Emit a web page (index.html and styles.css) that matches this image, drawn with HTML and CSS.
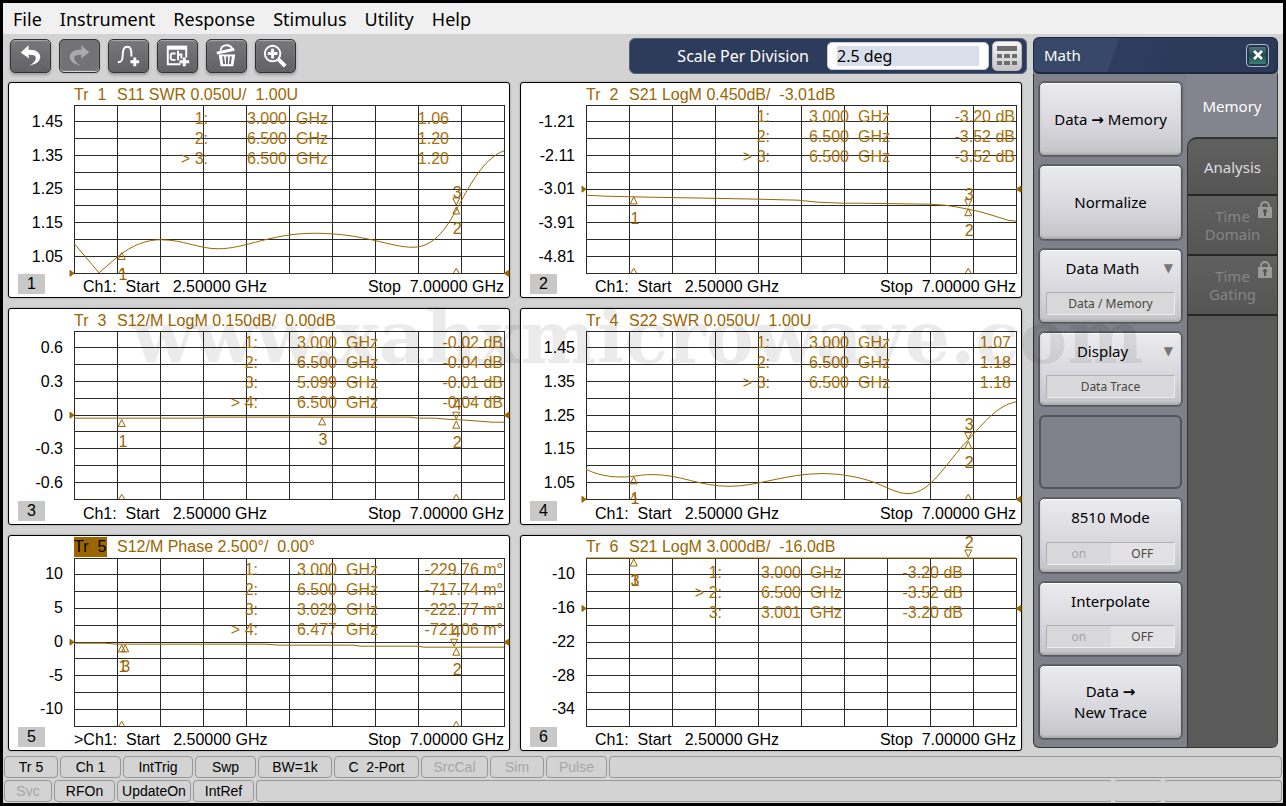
FILE: index.html
```html
<!DOCTYPE html>
<html lang="en">
<head>
    <meta charset="UTF-8">
    <meta name="viewport" content="width=device-width, initial-scale=1.0">
    <title>Network Analyzer</title>
    <link rel="stylesheet" href="styles.css">
</head>
<body>

    <!-- shared shapes -->
    <svg class="defs" width="0" height="0" aria-hidden="true">
        <symbol id="grid" overflow="visible">
            <rect width="100%" height="100%" />
            <line x1="10%" x2="10%" y2="100%" /><line x1="20%" x2="20%" y2="100%" /><line x1="30%" x2="30%" y2="100%" />
            <line x1="40%" x2="40%" y2="100%" /><line x1="50%" x2="50%" y2="100%" /><line x1="60%" x2="60%" y2="100%" />
            <line x1="70%" x2="70%" y2="100%" /><line x1="80%" x2="80%" y2="100%" /><line x1="90%" x2="90%" y2="100%" />
            <line y1="10%" y2="10%" x2="100%" /><line y1="20%" y2="20%" x2="100%" /><line y1="30%" y2="30%" x2="100%" />
            <line y1="40%" y2="40%" x2="100%" /><line y1="50%" y2="50%" x2="100%" /><line y1="60%" y2="60%" x2="100%" />
            <line y1="70%" y2="70%" x2="100%" /><line y1="80%" y2="80%" x2="100%" /><line y1="90%" y2="90%" x2="100%" />
        </symbol>
        <defs>
            <path id="up" d="M0 1L3.5 8H-3.5Z" />
            <path id="down" d="M0 -1L3.5 -8H-3.5Z" />
            <path id="foot" d="M-3 0L0 -5L3 0" />
            <path id="ref-l" d="M0 0L-4 -3V3Z" />
            <path id="ref-r" d="M0 0L5 -3V3Z" />
            <g id="lock">
                <path d="M3 7V5a4 4 0 0 1 8 0v2" fill="none" stroke="#9a9a9a" stroke-width="2" />
                <rect y="6" width="14" height="11" fill="#9a9a9a" />
                <circle cx="7" cy="10" r="2" fill="#555" />
                <rect x="6" y="10" width="2" height="5" fill="#555" />
            </g>
        </defs>
    </svg>

    <nav class="menu">
        <a href="#">File</a>
        <a href="#">Instrument</a>
        <a href="#">Response</a>
        <a href="#">Stimulus</a>
        <a href="#">Utility</a>
        <a href="#">Help</a>
    </nav>

    <main class="main">
        <div class="work">
            <div class="toolbar">
                <button class="tool" aria-label="Undo">
                    <svg width="40" height="33" viewBox="0 0 40 33"><path d="M10 13L18 5.500V10C26 9.500 30 13 30 17.500C30 22 26 25 18.500 26.500C23 24 25.500 21.500 25.500 18.500C25.500 16 23 15 18 15.200L18.500 19Z" fill="#fff" /></svg>
                </button>
                <button class="tool off" aria-label="Redo">
                    <svg width="40" height="33" viewBox="0 0 40 33"><path d="M30 13L22 5.500V10C14 9.500 10 13 10 17.500C10 22 14 25 21.500 26.500C17 24 14.500 21.500 14.500 18.500C14.500 16 17 15 22 15.200L21.500 19Z" fill="#aaaaae" /></svg>
                </button>
                <button class="tool" aria-label="Add trace">
                    <svg width="40" height="33" viewBox="0 0 40 33" fill="none" stroke="#fff"><path d="M9 23C13 23 14 21 14 16C14 10 15 7 18.500 7C23 7 23 11 23 17" stroke-width="2" /><path d="M26.500 18V27M22 22.500H31" stroke-width="3" /></svg>
                </button>
                <button class="tool" aria-label="Add channel">
                    <svg width="40" height="33" viewBox="0 0 40 33" fill="none" stroke="#fff"><path d="M29 18V7H10V25H23" stroke-width="2" /><path d="M10 8H29" stroke-width="4" /><path d="M18 14H14L13 15.500V19L14 20.500H18M20.500 11V21M20.500 16L22 15H24V19" stroke-width="2" /><path d="M27 18V27M22 22.500H32" stroke-width="3" /></svg>
                </button>
                <button class="tool" aria-label="Delete">
                    <svg width="40" height="33" viewBox="0 0 40 33" fill="none" stroke="#fff"><path d="M10 13.500L28 9.500" stroke-width="3" /><path d="M14 11C14 5 23 3 26 9" stroke-width="2" /><path d="M12 15H29L27 27H14Z" fill="#fff" stroke="none" /><path d="M16.500 17L17.500 25M20.500 17V25M24.500 17L23.500 25" stroke="#6b6b6e" stroke-width="2" /></svg>
                </button>
                <button class="tool" aria-label="Zoom">
                    <svg width="40" height="33" viewBox="0 0 40 33" fill="none" stroke="#fff"><circle cx="17" cy="14" r="8" stroke-width="2" /><path d="M17 9V19M12 14H22" stroke-width="3" /><path d="M23 20L30 27" stroke-width="4" /></svg>
                </button>

                <div class="entry">
                    <label for="scale">Scale Per Division</label>
                    <input id="scale" type="text" value="2.5 deg">
                    <button class="keypad" aria-label="Keypad">
                        <svg width="20" height="20" viewBox="0 0 20 20" fill="#6e6e70"><path d="M0 0H20V5H0ZM0 8H5V12H0ZM7 8H13V12H7ZM15 8H20V12H15ZM0 15H5V19H0ZM7 15H13V19H7ZM15 15H20V19H15Z" /></svg>
                    </button>
                </div>
            </div>

            <div class="charts">
                <section class="chart">
                    <header class="title"><span class="tr">Tr  1</span><span>S11 SWR 0.050U/  1.00U</span></header>
                    <div class="scale"><span>1.45</span><span>1.35</span><span>1.25</span><span>1.15</span><span>1.05</span></div>
                    <div class="plot">
                        <svg class="canvas">
                            <use class="grid" href="#grid" width="100%" height="100%" />
                            <svg viewBox="0 0 430 168" preserveAspectRatio="none">
                                <path class="trace" d="M0 138L25 167.5L43 152C59 139 73 134.5 87 134.5C109 134.5 125 143.5 144 143.5C172 143.5 196 128 241 128C290 128 316 142 339 142C365 142 378 112 387 96C400 72 413 52 430 45.7" />
                            </svg>
                            <g class="mark">
                                <use href="#ref-l" y="100%" /><use href="#ref-r" x="100%" y="100%" />
                                <use href="#up" x="11.1%" y="87%" /><text x="11.4%" y="87%" dy="29">1</text>
                                <use href="#up" x="88.9%" y="60%" /><text x="89.1%" y="60%" dy="28">2</text>
                                <use href="#down" x="88.9%" y="60%" /><text x="89.1%" y="60%" dy="-8">3</text>
                                <use href="#foot" x="11.1%" y="100%" /><use href="#foot" x="88.9%" y="100%" />
                            </g>
                        </svg>
                        <table class="readout inset">
                            <tr><td>1:</td><td>3.000</td><td>GHz</td><td>1.06</td></tr>
                            <tr><td>2:</td><td>6.500</td><td>GHz</td><td>1.20</td></tr>
                            <tr><td>&gt; 3:</td><td>6.500</td><td>GHz</td><td>1.20</td></tr>
                        </table>
                    </div>
                    <span class="num">1</span>
                    <footer class="sweep"><span>  Ch1:  Start   2.50000 GHz</span><span>Stop  7.00000 GHz</span></footer>
                </section>

                <section class="chart">
                    <header class="title"><span class="tr">Tr  2</span><span>S21 LogM 0.450dB/  -3.01dB</span></header>
                    <div class="scale"><span>-1.21</span><span>-2.11</span><span>-3.01</span><span>-3.91</span><span>-4.81</span></div>
                    <div class="plot">
                        <svg class="canvas">
                            <use class="grid" href="#grid" width="100%" height="100%" />
                            <svg viewBox="0 0 430 168" preserveAspectRatio="none">
                                <polyline class="trace" points="0,90 19,91 63,92 121,93 172,94 212,95 232,97 256,98 273,98 344,99 359,100 372,102 382,104 392,106 406,110 422,115 430,116" />
                            </svg>
                            <g class="mark">
                                <use href="#ref-l" y="50%" /><use href="#ref-r" x="100%" y="50%" />
                                <use href="#up" x="11.1%" y="54%" /><text x="11.4%" y="54%" dy="28">1</text>
                                <use href="#up" x="88.9%" y="61%" /><text x="89.1%" y="61%" dy="28">2</text>
                                <use href="#down" x="88.9%" y="61%" /><text x="89.1%" y="61%" dy="-8">3</text>
                                <use href="#foot" x="11.1%" y="100%" /><use href="#foot" x="88.9%" y="100%" />
                            </g>
                        </svg>
                        <table class="readout">
                            <tr><td>1:</td><td>3.000</td><td>GHz</td><td>-3.20 dB</td></tr>
                            <tr><td>2:</td><td>6.500</td><td>GHz</td><td>-3.52 dB</td></tr>
                            <tr><td>&gt; 3:</td><td>6.500</td><td>GHz</td><td>-3.52 dB</td></tr>
                        </table>
                    </div>
                    <span class="num">2</span>
                    <footer class="sweep"><span>  Ch1:  Start   2.50000 GHz</span><span>Stop  7.00000 GHz</span></footer>
                </section>

                <section class="chart">
                    <header class="title"><span class="tr">Tr  3</span><span>S12/M LogM 0.150dB/  0.00dB</span></header>
                    <div class="scale"><span>0.6</span><span>0.3</span><span>0</span><span>-0.3</span><span>-0.6</span></div>
                    <div class="plot">
                        <svg class="canvas">
                            <use class="grid" href="#grid" width="100%" height="100%" />
                            <svg viewBox="0 0 430 168" preserveAspectRatio="none">
                                <polyline class="trace" points="0,87 129,87 130,86 337,86 344,87 362,87 372,88 392,89 405,90 418,91 430,91" />
                            </svg>
                            <g class="mark">
                                <use href="#ref-l" y="50%" /><use href="#ref-r" x="100%" y="50%" />
                                <use href="#up" x="11.1%" y="52%" /><text x="11.4%" y="52%" dy="28">1</text>
                                <use href="#up" x="57.7%" y="51%" /><text x="57.9%" y="51%" dy="28">3</text>
                                <use href="#up" x="88.9%" y="53%" /><text x="89.1%" y="53%" dy="28">2</text>
                                <use href="#down" x="88.9%" y="53%" /><text x="89.1%" y="53%" dy="-10">4</text>
                                <use href="#foot" x="11.1%" y="100%" /><use href="#foot" x="88.9%" y="100%" />
                            </g>
                        </svg>
                        <table class="readout">
                            <tr><td>1:</td><td>3.000</td><td>GHz</td><td>-0.02 dB</td></tr>
                            <tr><td>2:</td><td>6.500</td><td>GHz</td><td>-0.04 dB</td></tr>
                            <tr><td>3:</td><td>5.099</td><td>GHz</td><td>-0.01 dB</td></tr>
                            <tr><td>&gt; 4:</td><td>6.500</td><td>GHz</td><td>-0.04 dB</td></tr>
                        </table>
                    </div>
                    <span class="num">3</span>
                    <footer class="sweep"><span>  Ch1:  Start   2.50000 GHz</span><span>Stop  7.00000 GHz</span></footer>
                </section>

                <section class="chart">
                    <header class="title"><span class="tr">Tr  4</span><span>S22 SWR 0.050U/  1.00U</span></header>
                    <div class="scale"><span>1.45</span><span>1.35</span><span>1.25</span><span>1.15</span><span>1.05</span></div>
                    <div class="plot">
                        <svg class="canvas">
                            <use class="grid" href="#grid" width="100%" height="100%" />
                            <svg viewBox="0 0 430 168" preserveAspectRatio="none">
                                <path class="trace" d="M0 138C12 144 24 145.7 36 145.7C49 145.7 53 143.3 66 143.3C96 143.3 112 155 144 155C172 155 200 142.3 236 142.3C258 142.3 277 147 287 150.7C300 155 310 162.3 322 162.3C345 162.3 360 131 382 109C398 91 412 74 430 70.7" />
                            </svg>
                            <g class="mark">
                                <use href="#ref-l" y="100%" /><use href="#ref-r" x="100%" y="100%" />
                                <use href="#up" x="11.1%" y="86%" /><text x="11.4%" y="86%" dy="28">1</text>
                                <use href="#up" x="88.9%" y="65%" /><text x="89.1%" y="65%" dy="28">2</text>
                                <use href="#down" x="88.9%" y="65%" /><text x="89.1%" y="65%" dy="-10">3</text>
                                <use href="#foot" x="11.1%" y="100%" /><use href="#foot" x="88.9%" y="100%" />
                            </g>
                        </svg>
                        <table class="readout near">
                            <tr><td>1:</td><td>3.000</td><td>GHz</td><td>1.07</td></tr>
                            <tr><td>2:</td><td>6.500</td><td>GHz</td><td>1.18</td></tr>
                            <tr><td>&gt; 3:</td><td>6.500</td><td>GHz</td><td>1.18</td></tr>
                        </table>
                    </div>
                    <span class="num">4</span>
                    <footer class="sweep"><span>  Ch1:  Start   2.50000 GHz</span><span>Stop  7.00000 GHz</span></footer>
                </section>

                <section class="chart">
                    <header class="title"><span class="tr active">Tr  5</span><span>S12/M Phase 2.500°/  0.00°</span></header>
                    <div class="scale"><span>10</span><span>5</span><span>0</span><span>-5</span><span>-10</span></div>
                    <div class="plot">
                        <svg class="canvas">
                            <use class="grid" href="#grid" width="100%" height="100%" />
                            <svg viewBox="0 0 430 168" preserveAspectRatio="none">
                                <polyline class="trace" points="0,85 30,85 43,86 190,86 206,87 280,87 286,88 344,88 350,89 430,89" />
                            </svg>
                            <g class="mark">
                                <use href="#ref-l" y="50%" /><use href="#ref-r" x="100%" y="50%" />
                                <use href="#up" x="11.1%" y="51%" /><text x="11.4%" y="51%" dy="28">1</text>
                                <use href="#up" x="11.9%" y="51%" /><text x="12%" y="51%" dy="28">3</text>
                                <use href="#up" x="88.9%" y="53%" /><text x="89.1%" y="53%" dy="28">2</text>
                                <use href="#down" x="88.4%" y="53%" /><text x="88.8%" y="53%" dy="-10">4</text>
                                <use href="#foot" x="11.1%" y="100%" /><use href="#foot" x="88.9%" y="100%" />
                            </g>
                        </svg>
                        <table class="readout">
                            <tr><td>1:</td><td>3.000</td><td>GHz</td><td>-229.76 m°</td></tr>
                            <tr><td>2:</td><td>6.500</td><td>GHz</td><td>-717.74 m°</td></tr>
                            <tr><td>3:</td><td>3.029</td><td>GHz</td><td>-222.77 m°</td></tr>
                            <tr><td>&gt; 4:</td><td>6.477</td><td>GHz</td><td>-721.06 m°</td></tr>
                        </table>
                    </div>
                    <span class="num">5</span>
                    <footer class="sweep"><span>&gt;Ch1:  Start   2.50000 GHz</span><span>Stop  7.00000 GHz</span></footer>
                </section>

                <section class="chart">
                    <header class="title"><span class="tr">Tr  6</span><span>S21 LogM 3.000dB/  -16.0dB</span></header>
                    <div class="scale"><span>-10</span><span>-16</span><span>-22</span><span>-28</span><span>-34</span></div>
                    <div class="plot">
                        <svg class="canvas">
                            <use class="grid" href="#grid" width="100%" height="100%" />
                            <svg viewBox="0 0 430 168" preserveAspectRatio="none" overflow="visible">
                                <polyline class="trace" points="0,0 430,0" />
                            </svg>
                            <g class="mark">
                                <use href="#ref-l" y="30%" /><use href="#ref-r" x="100%" y="30%" />
                                <use href="#up" x="11.1%" y="0" /><text x="11.4%" y="0" dy="28">1</text><text x="11.4%" y="0" dy="28">3</text>
                                <use href="#down" x="88.9%" y="0" /><text x="89.1%" y="0" dy="-10">2</text>
                            </g>
                        </svg>
                        <table class="readout inset low">
                            <tr><td>1:</td><td>3.000</td><td>GHz</td><td>-3.20 dB</td></tr>
                            <tr><td>&gt; 2:</td><td>6.500</td><td>GHz</td><td>-3.52 dB</td></tr>
                            <tr><td>3:</td><td>3.001</td><td>GHz</td><td>-3.20 dB</td></tr>
                        </table>
                    </div>
                    <span class="num">6</span>
                    <footer class="sweep"><span>  Ch1:  Start   2.50000 GHz</span><span>Stop  7.00000 GHz</span></footer>
                </section>
            </div>
        </div>

        <aside class="panel">
            <header class="panel-head">
                <h1>Math</h1>
                <button class="close" aria-label="Close">
                    <svg width="12" height="12" viewBox="0 0 12 12"><path d="M2 2L10 10M10 2L2 10" stroke="#fff" stroke-width="2.500" /></svg>
                </button>
            </header>
            <div class="panel-body">
                <div class="keys">
                    <button class="key">Data <span class="arrow">→</span> Memory</button>
                    <button class="key">Normalize</button>
                    <button class="key split drop"><span>Data Math</span><span class="value">Data / Memory</span></button>
                    <button class="key split drop"><span>Display</span><span class="value">Data Trace</span></button>
                    <div class="blank"></div>
                    <button class="key split"><span>8510 Mode</span><span class="value toggle"><span>on</span><b>OFF</b></span></button>
                    <button class="key split"><span>Interpolate</span><span class="value toggle"><span>on</span><b>OFF</b></span></button>
                    <button class="key">Data <span class="arrow">→</span><br>New Trace</button>
                </div>
                <div class="tabs">
                    <button class="tab current">Memory</button>
                    <button class="tab first">Analysis</button>
                    <button class="tab locked" disabled>Time<br>Domain<svg class="lock" width="14" height="17"><use href="#lock" /></svg></button>
                    <button class="tab locked" disabled>Time<br>Gating<svg class="lock" width="14" height="17"><use href="#lock" /></svg></button>
                    <div class="rest"></div>
                </div>
            </div>
        </aside>
    </main>

    <div class="status">
        <div class="status-row">
            <span class="cell w54">Tr 5</span>
            <span class="cell w60">Ch 1</span>
            <span class="cell w70">IntTrig</span>
            <span class="cell w60">Swp</span>
            <span class="cell w74">BW=1k</span>
            <span class="cell w85">C  2-Port</span>
            <span class="cell w67 dim">SrcCal</span>
            <span class="cell w54 dim">Sim</span>
            <span class="cell w60 dim">Pulse</span>
            <span class="cell fill"></span>
        </div>
        <div class="status-row">
            <span class="cell w48 dim">Svc</span>
            <span class="cell w60">RFOn</span>
            <span class="cell w74">UpdateOn</span>
            <span class="cell w60">IntRef</span>
            <span class="cell fill open-right"></span>
            <span class="cell w48 open-left open-right"></span>
            <span class="cell w118 open-left"></span>
        </div>
    </div>

    <div class="watermark">www.xahxmicrowave.com</div>

</body>
</html>
```
FILE: styles.css
```css
* {
    box-sizing: border-box;
}
body {
    margin: 0;
    min-height: 100vh;
    display: flex;
    flex-direction: column;
    position: relative;
    border: 3px solid #000;
    background: #d3d3d3;
    color: #000;
    font-family: "Noto Sans", "Open Sans", sans-serif;
    font-size: 15px;
}
button {
    font: inherit;
    padding: 0;
    cursor: pointer;
}
.defs {
    position: absolute;
}

/* menu */
.menu {
    display: flex;
    align-items: center;
    gap: 18px;
    height: 31px;
    padding: 0 10px;
    background: #f0f0f0;
    font-size: 18px;
    line-height: 28px;
}
.menu a {
    color: #000;
    text-decoration: none;
}

.main {
    flex: 1;
    display: flex;
    gap: 6px;
    padding: 0 5px;
}
.work {
    flex: 1;
    display: flex;
    flex-direction: column;
}

/* toolbar */
.toolbar {
    display: flex;
    align-items: center;
    gap: 8px;
    padding: 4px 0 8px 2px;
}
.tool {
    width: 41px;
    height: 34px;
    border: 1px solid #303032;
    border-radius: 5px;
    background: linear-gradient(#78787b, #626266);
    box-shadow: inset 0 1px 1px #aaa, 0 2px 3px #999;
}
.tool svg {
    display: block;
    width: 39px;
    height: 32px;
}
.tool.off {
    background: #727277;
    box-shadow: inset 0 -1px 1px #ddd, 0 1px 2px #bbb;
}
.entry {
    display: flex;
    align-items: center;
    justify-content: flex-end;
    width: 398px;
    height: 36px;
    margin-left: auto;
    padding-right: 4px;
    border: 1px solid #52607c;
    border-radius: 6px;
    background: #2e3c5c;
    color: #fff;
    font-size: 16px;
}
.entry input {
    width: 162px;
    height: 28px;
    margin: 0 3px 0 18px;
    padding: 3px 9px;
    border: 1px solid #c8ccd4;
    border-radius: 5px;
    background: linear-gradient(#d8deea, #d8deea) content-box, #fff;
    font: inherit;
}
.keypad {
    display: flex;
    align-items: center;
    justify-content: center;
    width: 30px;
    height: 30px;
    border: 1px solid #bbb;
    border-radius: 5px;
    background: linear-gradient(#f6f6f6, #c6c6c8);
}

/* charts */
.charts {
    flex: 1;
    display: grid;
    grid-template-columns: 1fr 1fr;
    grid-auto-rows: 1fr;
    gap: 10px;
    margin-right: 5px;
    font-family: "Liberation Sans", Arial, sans-serif;
    font-size: 16px;
    line-height: 20px;
}
.chart {
    display: grid;
    grid-template-columns: 65px 1fr 5px;
    grid-template-rows: 22px minmax(168px, 1fr) 24px;
    border: 1px solid #000;
    border-radius: 3px;
    background: #fff;
    box-shadow: 0 0 2px #888;
}
.title {
    grid-column: 2;
    display: flex;
    align-items: center;
    padding-top: 1px;
    color: #9c6500;
    white-space: pre;
}
.tr {
    width: 33px;
    margin-right: 10px;
}
.tr.active {
    background: #9c6500;
    color: #000;
}
.scale {
    grid-column: 1;
    display: flex;
    flex-direction: column;
    padding-right: 11px;
    text-align: right;
}
.scale span {
    flex: 1;
    display: flex;
    align-items: center;
    justify-content: flex-end;
}
.plot {
    position: relative;
    grid-column: 2;
}
.canvas {
    position: absolute;
    width: 100%;
    height: 100%;
    overflow: visible;
}
.grid {
    fill: none;
    stroke: #2a2a2a;
    shape-rendering: crispEdges;
}
.trace {
    fill: none;
    stroke: #9c6500;
    vector-effect: non-scaling-stroke;
}
.mark {
    fill: none;
    stroke: #9c6500;
}
.mark text {
    fill: #9c6500;
    stroke: none;
    text-anchor: middle;
}
#ref-l, #ref-r {
    fill: #9c6500;
}
.readout {
    position: absolute;
    top: 2px;
    right: 1px;
    border-collapse: collapse;
    color: #a8700a;
    text-align: right;
    white-space: pre;
}
.readout td {
    height: 20px;
    padding: 0;
}
.readout td:nth-child(2) {
    width: 79px;
}
.readout td:nth-child(3) {
    width: 41px;
}
.readout td:nth-child(4) {
    width: 125px;
}
.readout.near td:nth-child(4), .readout.inset td:nth-child(4) {
    width: 121px;
}
.readout.near {
    right: 5px;
}
.readout.inset {
    top: 4px;
    right: 55px;
}
.readout.low {
    top: 5px;
    right: 53px;
}
.num {
    grid-column: 1;
    grid-row: 3;
    width: 27px;
    height: 20px;
    margin: 1px 0 0 9px;
    background: #c8c8c8;
    text-align: center;
}
.sweep {
    grid-column: 2;
    grid-row: 3;
    display: flex;
    align-items: center;
    justify-content: space-between;
    padding-top: 4px;
    white-space: pre;
}

/* side panel */
.panel {
    width: 245px;
    display: flex;
    flex-direction: column;
    margin: 3px 0;
    border-radius: 6px;
    background: #80808a;
    overflow: hidden;
}
.panel-head {
    display: flex;
    align-items: center;
    justify-content: space-between;
    height: 37px;
    padding: 0 8px 0 10px;
    border: 1px solid #1c2740;
    border-bottom-width: 2px;
    border-radius: 6px;
    background: linear-gradient(110deg, #384868 33%, #2e3d5e 34%, #2b3856);
    color: #fff;
}
.panel-head h1 {
    margin: 0;
    font-size: 15px;
    font-weight: normal;
}
.close {
    display: flex;
    align-items: center;
    justify-content: center;
    width: 23px;
    height: 23px;
    border: 1px solid #aeb9c8;
    border-radius: 4px;
    background: linear-gradient(#5d7b88, #1f4a50 50%, #3f8f80);
    box-shadow: inset 0 0 0 2px #26344c;
}
.panel-body {
    flex: 1;
    display: flex;
    border: 1px solid #33352a;
    border-top: 0;
    border-radius: 0 0 6px 6px;
}
.keys {
    flex: 1;
    display: grid;
    grid-auto-rows: 1fr;
    gap: 9px;
    padding: 8px 5px;
}
.key {
    border: 1px solid #55555c;
    border-radius: 5px;
    background: linear-gradient(#ebebef, #d8d8de 55%, #c3c3c8);
    box-shadow: inset 0 1px 1px #fff, inset 0 -2px 2px #aaa, 0 0 0 1px #65656d;
    color: #000;
    line-height: 21px;
}
.arrow {
    font-family: "DejaVu Sans", sans-serif;
    font-weight: bold;
    line-height: 20px;
}
.split {
    position: relative;
    display: flex;
    flex-direction: column;
    justify-content: space-between;
    padding: 8px 6px 7px;
    text-align: center;
}
.drop > span:first-child {
    padding-right: 16px;
}
.drop::after {
    content: "▼";
    position: absolute;
    top: 8px;
    right: 8px;
    color: #76767a;
    font-family: "DejaVu Sans", sans-serif;
    font-size: 12px;
}
.value {
    height: 23px;
    border: 1px solid #b0b0b4;
    border-right-color: #eee;
    border-bottom-color: #eee;
    border-radius: 2px;
    background: #d8d8db;
    color: #4a463c;
    font-size: 12px;
}
.toggle {
    display: flex;
}
.toggle span, .toggle b {
    flex: 1;
    font-weight: normal;
}
.toggle span {
    color: #a4a4a8;
}
.toggle b {
    background: #e2e2e5;
}
.blank {
    border: 2px solid #53535b;
    border-radius: 6px;
}
.tabs {
    width: 90px;
    display: flex;
    flex-direction: column;
}
.tab {
    position: relative;
    height: 60px;
    border: 0;
    border-bottom: 2px solid #262626;
    border-left: 1px solid #33352a;
    background: linear-gradient(#606060, #555);
    color: #ddd;
    line-height: 18px;
}
.tab.current {
    height: 63px;
    border: 0;
    background: #84848e;
    color: #fff;
}
.tab.first {
    height: 59px;
    border-top: 2px solid #33352a;
    border-radius: 10px 0 0;
}
.tab.locked {
    color: #858585;
}
.lock {
    position: absolute;
    top: 5px;
    right: 5px;
}
.rest {
    flex: 1;
    border-left: 1px solid #33352a;
    background: #5a5a5a;
}

/* status bar */
.status {
    display: flex;
    flex-direction: column;
    gap: 2px;
    padding: 5px 1px 1px;
    font-family: "Liberation Sans", Arial, sans-serif;
    font-size: 14px;
}
.status-row {
    display: flex;
    gap: 2px;
}
.cell {
    height: 22px;
    border: 1px solid #999;
    border-radius: 4px;
    line-height: 20px;
    text-align: center;
    white-space: pre;
}
.w48 { width: 48px; }
.w54 { width: 54px; }
.w60 { width: 61px; }
.w67 { width: 67px; }
.w70 { width: 70px; }
.w74 { width: 74px; }
.w85 { width: 85px; }
.w118 { width: 118px; }
.fill {
    flex: 1;
}
.open-right {
    border-right-color: transparent;
}
.open-left {
    border-left-color: transparent;
}
.dim {
    color: #a6a6a6;
}

.watermark {
    position: absolute;
    top: 293px;
    left: 129px;
    color: rgba(0, 0, 0, 0.08);
    font-family: "DejaVu Serif", serif;
    font-size: 72px;
    font-weight: bold;
    line-height: 84px;
    pointer-events: none;
}
```
